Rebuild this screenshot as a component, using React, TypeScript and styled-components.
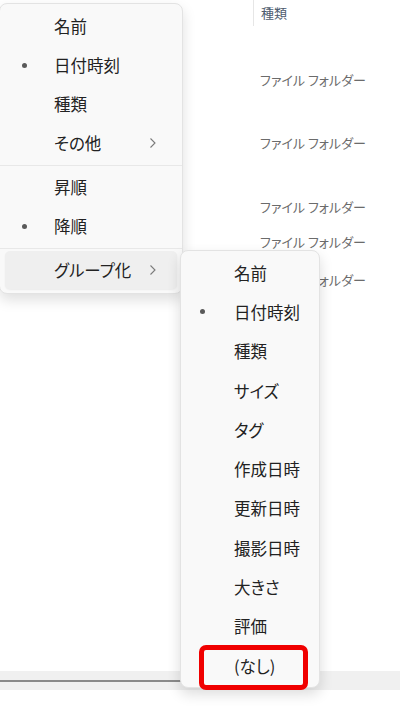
import React from 'react'
import styled, { createGlobalStyle } from 'styled-components'

const Global = createGlobalStyle`
  html, body { margin: 0; padding: 0; background: #ffffff; }
  body {
    font-family: "Noto Sans CJK JP", "Noto Sans", sans-serif;
    font-feature-settings: "palt";
  }
`

type Item = { label: string; dot?: boolean; sub?: boolean; active?: boolean }

const sortItems: Item[][] = [
  [
    { label: '名前' },
    { label: '日付時刻', dot: true },
    { label: '種類' },
    { label: 'その他', sub: true },
  ],
  [{ label: '昇順' }, { label: '降順', dot: true }],
  [{ label: 'グループ化', sub: true, active: true }],
]

const groupItems: Item[] = [
  { label: '名前' },
  { label: '日付時刻', dot: true },
  { label: '種類' },
  { label: 'サイズ' },
  { label: 'タグ' },
  { label: '作成日時' },
  { label: '更新日時' },
  { label: '撮影日時' },
  { label: '大きさ' },
  { label: '評価' },
  { label: '(なし)' },
]

// background rows, gap before each one
const rows = [44, 43, 44, 15, 18]

const Chevron = () => (
  <svg width="8" height="12" viewBox="0 0 8 12">
    <path d="M1.5 1.5 L6 6 L1.5 10.5" fill="none" stroke="#7a7a7a" strokeWidth="1.1" />
  </svg>
)

const App = () => {
  return (
    <Page>
      <Global />
      <Header>
        <HeaderCell>種類</HeaderCell>
      </Header>
      <List>
        {rows.map((gap, i) => (
          <Row key={i} gap={gap}>
            ファイル フォルダー
          </Row>
        ))}
      </List>
      <Scrollbar>
        <Thumb />
      </Scrollbar>

      <SortMenu>
        {sortItems.map((group, gi) => (
          <React.Fragment key={gi}>
            {gi > 0 && <Separator />}
            {group.map((it) => (
              <MenuItem key={it.label} active={it.active}>
                <DotSlot slot={49}>{it.dot && <Dot />}</DotSlot>
                <Label>{it.label}</Label>
                {it.sub && (
                  <Arrow>
                    <Chevron />
                  </Arrow>
                )}
              </MenuItem>
            ))}
          </React.Fragment>
        ))}
      </SortMenu>

      <GroupMenu>
        {groupItems.map((it) => (
          <GroupItem key={it.label}>
            <DotSlot slot={53}>{it.dot && <Dot />}</DotSlot>
            <Label>{it.label}</Label>
          </GroupItem>
        ))}
      </GroupMenu>

      <Highlight />
    </Page>
  )
}

export default App

const Page = styled.div`
  position: relative;
  width: 400px;
  height: 720px;
  overflow: hidden;
  background: #ffffff;
  display: flex;
  flex-direction: column;
`
const Header = styled.div`
  height: 26px;
  display: flex;
  padding-left: 253px;
`
const HeaderCell = styled.div`
  border-left: 1px solid #e6e6e6;
  padding-left: 7px;
  font-size: 13px;
  line-height: 26px;
  color: #4d5b6e;
`
const List = styled.div`
  flex: 1;
  display: flex;
  flex-direction: column;
  padding-left: 260px;
`
const Row = styled.div<{ gap: number }>`
  margin-top: ${(p) => p.gap}px;
  font-size: 13px;
  line-height: 20px;
  color: #6b6b6b;
  white-space: nowrap;
`
const Scrollbar = styled.div`
  height: 19px;
  background: #f0f0f0;
  margin-bottom: 30px;
  display: flex;
  align-items: center;
`
const Thumb = styled.div`
  width: 200px;
  height: 2px;
  background: #8a8a8a;
`
const SortMenu = styled.div`
  position: absolute;
  left: -1px;
  top: 3px;
  width: 182px;
  padding: 3px 0 3px;
  background: #f9f9f9;
  border: 1px solid #e3e3e3;
  border-radius: 8px;
  box-shadow: 0 6px 14px rgba(0, 0, 0, 0.13);
  display: flex;
  flex-direction: column;
`
const Separator = styled.div`
  height: 1px;
  background: #e8e8e8;
  margin: 2px 0;
`
const MenuItem = styled.div<{ active?: boolean }>`
  height: 38px;
  margin: 0 5px 1px;
  border-radius: 5px;
  display: flex;
  align-items: center;
  background: ${(p) => (p.active ? '#efefef' : 'transparent')};
  box-shadow: ${(p) => (p.active ? '0 1px 2px rgba(0,0,0,0.06)' : 'none')};
`
const DotSlot = styled.div<{ slot: number }>`
  width: ${(p) => p.slot}px;
  display: flex;
  justify-content: center;
`
const Dot = styled.span`
  width: 5px;
  height: 5px;
  border-radius: 50%;
  background: #5a5a5a;
  margin-right: 11px;
`
const Label = styled.span`
  flex: 1;
  font-size: 16.5px;
  color: #222222;
  white-space: nowrap;
`
const Arrow = styled.div`
  width: 28px;
  display: flex;
  align-items: center;
  justify-content: flex-start;
`
const GroupMenu = styled.div`
  position: absolute;
  left: 180px;
  top: 250px;
  width: 138px;
  padding: 2px 0;
  background: #f9f9f9;
  border: 1px solid #e3e3e3;
  border-radius: 8px;
  box-shadow: 0 6px 14px rgba(0, 0, 0, 0.14);
  display: flex;
  flex-direction: column;
`
const GroupItem = styled.div`
  height: 39.3px;
  display: flex;
  align-items: center;
`
const Highlight = styled.div`
  position: absolute;
  left: 199px;
  top: 645px;
  width: 109px;
  height: 45px;
  box-sizing: border-box;
  border: 5px solid #f00000;
  border-radius: 7px;
`
